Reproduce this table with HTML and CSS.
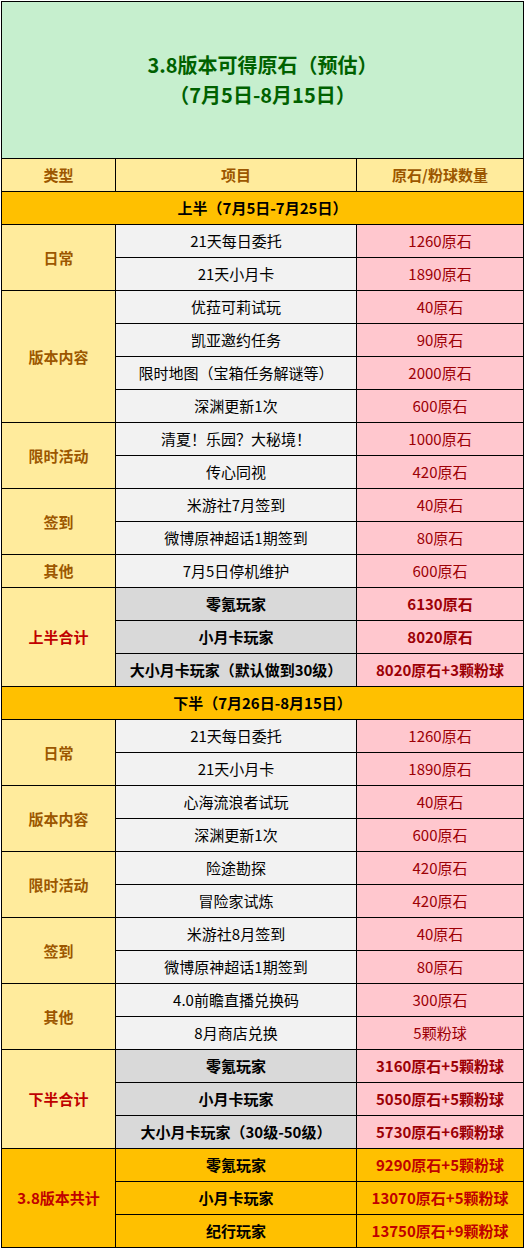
FILE: index.html
```html
<!DOCTYPE html>
<html lang="zh-CN">
<head>
<meta charset="utf-8">
<link rel="stylesheet" href="styles.css">
</head>
<body>
<table class="sheet">
  <colgroup><col class="c1"><col class="c2"><col class="c3"></colgroup>
  <tr class="title-row"><td colspan="3" class="title">3.8版本可得原石（预估）<br>（7月5日-8月15日）</td></tr>
  <tr class="row head"><td>类型</td><td>项目</td><td>原石/粉球数量</td></tr>
  <tr class="row"><td colspan="3" class="section">上半（7月5日-7月25日）</td></tr>

  <tr class="row"><td rowspan="2" class="cat">日常</td><td class="item">21天每日委托</td><td class="val">1260原石</td></tr>
  <tr class="row"><td class="item">21天小月卡</td><td class="val">1890原石</td></tr>

  <tr class="row"><td rowspan="4" class="cat">版本内容</td><td class="item">优菈可莉试玩</td><td class="val">40原石</td></tr>
  <tr class="row"><td class="item">凯亚邀约任务</td><td class="val">90原石</td></tr>
  <tr class="row"><td class="item">限时地图（宝箱任务解谜等）</td><td class="val">2000原石</td></tr>
  <tr class="row"><td class="item">深渊更新1次</td><td class="val">600原石</td></tr>

  <tr class="row"><td rowspan="2" class="cat">限时活动</td><td class="item">清夏！乐园？大秘境！</td><td class="val">1000原石</td></tr>
  <tr class="row"><td class="item">传心同视</td><td class="val">420原石</td></tr>

  <tr class="row"><td rowspan="2" class="cat">签到</td><td class="item">米游社7月签到</td><td class="val">40原石</td></tr>
  <tr class="row"><td class="item">微博原神超话1期签到</td><td class="val">80原石</td></tr>

  <tr class="row"><td class="cat">其他</td><td class="item">7月5日停机维护</td><td class="val">600原石</td></tr>

  <tr class="row"><td rowspan="3" class="cat sum-cat">上半合计</td><td class="sum-item">零氪玩家</td><td class="val sum-val">6130原石</td></tr>
  <tr class="row"><td class="sum-item">小月卡玩家</td><td class="val sum-val">8020原石</td></tr>
  <tr class="row"><td class="sum-item">大小月卡玩家（默认做到30级）</td><td class="val sum-val">8020原石+3颗粉球</td></tr>

  <tr class="row"><td colspan="3" class="section">下半（7月26日-8月15日）</td></tr>

  <tr class="row"><td rowspan="2" class="cat">日常</td><td class="item">21天每日委托</td><td class="val">1260原石</td></tr>
  <tr class="row"><td class="item">21天小月卡</td><td class="val">1890原石</td></tr>

  <tr class="row"><td rowspan="2" class="cat">版本内容</td><td class="item">心海流浪者试玩</td><td class="val">40原石</td></tr>
  <tr class="row"><td class="item">深渊更新1次</td><td class="val">600原石</td></tr>

  <tr class="row"><td rowspan="2" class="cat">限时活动</td><td class="item">险途勘探</td><td class="val">420原石</td></tr>
  <tr class="row"><td class="item">冒险家试炼</td><td class="val">420原石</td></tr>

  <tr class="row"><td rowspan="2" class="cat">签到</td><td class="item">米游社8月签到</td><td class="val">40原石</td></tr>
  <tr class="row"><td class="item">微博原神超话1期签到</td><td class="val">80原石</td></tr>

  <tr class="row"><td rowspan="2" class="cat">其他</td><td class="item">4.0前瞻直播兑换码</td><td class="val">300原石</td></tr>
  <tr class="row"><td class="item">8月商店兑换</td><td class="val">5颗粉球</td></tr>

  <tr class="row"><td rowspan="3" class="cat sum-cat">下半合计</td><td class="sum-item">零氪玩家</td><td class="val sum-val">3160原石+5颗粉球</td></tr>
  <tr class="row"><td class="sum-item">小月卡玩家</td><td class="val sum-val">5050原石+5颗粉球</td></tr>
  <tr class="row"><td class="sum-item">大小月卡玩家（30级-50级）</td><td class="val sum-val">5730原石+6颗粉球</td></tr>

  <tr class="row"><td rowspan="3" class="total-cat">3.8版本共计</td><td class="total-item">零氪玩家</td><td class="total-val">9290原石+5颗粉球</td></tr>
  <tr class="row"><td class="total-item">小月卡玩家</td><td class="total-val">13070原石+5颗粉球</td></tr>
  <tr class="row"><td class="total-item">纪行玩家</td><td class="total-val">13750原石+9颗粉球</td></tr>
</table>
</body>
</html>
```
FILE: styles.css
```css
html, body {
  margin: 0;
  padding: 0;
  background: #ffffff;
}
body {
  padding: 1px 0 0 1px;
  font-family: "Noto Sans CJK SC", "Microsoft YaHei", sans-serif;
  font-size: 15px;
  color: #000000;
}
.sheet {
  border-collapse: collapse;
  table-layout: fixed;
  width: 522px;
}
.c1 { width: 114px; }
.c2 { width: 241px; }
.c3 { width: 167px; }
.sheet td {
  border: 1px solid #000000;
  padding: 0;
  text-align: center;
  vertical-align: middle;
  line-height: 20px;
  white-space: nowrap;
}
.row td { height: 32px; }
.title-row td {
  height: 156px;
}
.title {
  background: #c6efce;
  color: #006100;
  font-size: 20px;
  font-weight: 700;
  line-height: 30px !important;
}
.head td {
  background: #ffeb9c;
  color: #9c5700;
  font-weight: 700;
}
.section {
  background: #ffc000;
  font-weight: 700;
}
.cat {
  background: #ffeb9c;
  color: #9c5700;
  font-weight: 700;
}
.item {
  background: #f2f2f2;
}
.val {
  background: #ffc7ce;
  color: #9c0006;
}
.sum-cat {
  color: #c00000;
}
.sum-item {
  background: #d9d9d9;
  font-weight: 700;
}
.sum-val {
  font-weight: 700;
}
.total-cat {
  background: #ffc000;
  color: #c00000;
  font-weight: 700;
}
.total-item {
  background: #ffc000;
  font-weight: 700;
}
.total-val {
  background: #ffc000;
  color: #c00000;
  font-weight: 700;
}
```
